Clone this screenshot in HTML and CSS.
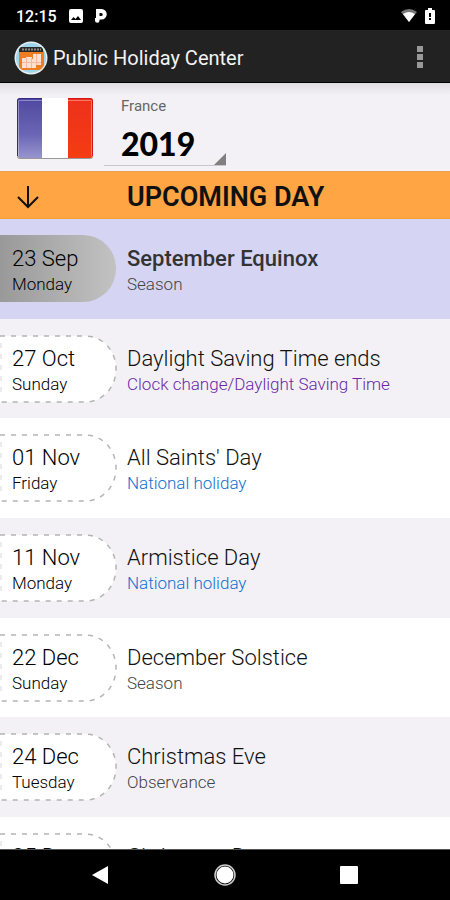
FILE: index.html
```html
<!DOCTYPE html>
<html lang="en">
<head>
<meta charset="utf-8">
<meta name="viewport" content="width=device-width, initial-scale=1">
<title>Public Holiday Center</title>
<link rel="stylesheet" href="styles.css">
</head>
<body>
<svg class="defs" aria-hidden="true">
  <symbol id="pill" viewBox="0 0 118 68">
    <path d="M0 1H85C103 1 116 16 116 34S103 67 85 67H0Z" fill="#fff"/>
    <path d="M0 1H85C103 1 116 16 116 34S103 67 85 67H0" fill="none" stroke="#b4b4b4" stroke-width="1.5" stroke-dasharray="5 6"/>
    <path d="M1 8V62" fill="none" stroke="#d8d8d8" stroke-dasharray="5 6"/>
  </symbol>
</svg>
<div class="status">
  <span>12:15</span>
  <svg width="14" height="14" viewBox="0 0 14 14"><path fill="#fff" fill-rule="evenodd" d="M2 0H12Q14 0 14 2V12Q14 14 12 14H2Q0 14 0 12V2Q0 0 2 0ZM2 11H12L9 7L6.500 10L4.500 8Z"/></svg>
  <svg class="parking" width="12" height="14" viewBox="0 0 12 14"><path fill="#fff" fill-rule="evenodd" d="M1 0H6.500A4.800 4.800 0 0 1 6.500 10.500H4.500V11.500A2.200 2.200 0 0 1 0 11.500V9H1ZM4.500 4V7H6.200A1.500 1.500 0 0 0 6.200 4Z"/></svg>
  <svg class="wifi" width="16" height="14" viewBox="0 0 16 14"><path fill="#777" d="M0 3Q8-3 16 3L8 13Z"/><path fill="#fff" d="M2 5Q8 1 14 5L8 13Z"/></svg>
  <svg width="10" height="16" viewBox="0 0 10 16"><path fill="#fff" d="M3 0H7V2H9Q10 2 10 3V15Q10 16 9 16H1Q0 16 0 15V3Q0 2 1 2H3Z"/><path d="M4 5H6V9H4ZM4 10H6V12H4Z"/></svg>
</div>
<header class="appbar">
  <svg width="34" height="34" viewBox="0 0 34 34">
    <defs><clipPath id="disc"><circle cx="17" cy="17" r="15"/></clipPath></defs>
    <circle cx="17" cy="17" r="16.500" fill="#e9eef0"/>
    <g clip-path="url(#disc)">
      <path fill="#9fd5ed" d="M0 0H34V34H0Z"/>
      <path fill="#ef7d22" d="M5 10H30V29H5Z"/>
      <path fill="#2b2a28" d="M5 6H29V11H5Z"/>
      <path stroke="#8a8a8a" stroke-width="2" stroke-dasharray="2 1" d="M8 8.500H27"/>
      <path fill="#ffe0d2" d="M8 17H12V16H18V18H19V13H27V24H22V27H8Z"/>
      <path stroke="#f8b899" d="M12.500 17V27M17.500 17V27M22.500 13V24M8 21.500H27"/>
    </g>
  </svg>
  <h1>Public Holiday Center</h1>
  <button class="menu" aria-label="More options"><svg width="7" height="23" viewBox="0 0 7 23"><path fill="#999" d="M0 0H6V6H0ZM0 8H6V14H0ZM0 16H6V22H0Z"/></svg></button>
</header>
<section class="picker">
  <svg class="flag" width="76" height="62" viewBox="0 0 76 62" role="img" aria-label="Flag of France">
    <defs>
      <linearGradient id="blue" x2="0" y2="1"><stop stop-color="#5048a0"/><stop offset=".6" stop-color="#6a65b3"/><stop offset="1" stop-color="#9894cf"/></linearGradient>
      <linearGradient id="red" x2="0" y2="1"><stop stop-color="#ee301c"/><stop offset="1" stop-color="#f43d12"/></linearGradient>
    </defs>
    <rect y="2" width="76" height="59" rx="3" fill="#999"/>
    <rect width="76" height="60" rx="3" fill="#fff"/>
    <path fill="url(#blue)" d="M3 0H25V60H3Q0 60 0 57V3Q0 0 3 0Z"/>
    <path fill="url(#red)" d="M51 0H73Q76 0 76 3V57Q76 60 73 60H51Z"/>
    <path fill="none" stroke="#fff" stroke-opacity=".35" d="M1.500 58V2.500H25M51 2.500H74.500V58"/>
    <path fill="none" stroke="#35298c" d="M.5 58V3Q.5 .5 3 .5H25"/>
    <path fill="none" stroke="#d01818" d="M51 .5H73Q75.500 .5 75.500 3V58"/>
  </svg>
  <div class="year">
    <label for="year">France</label>
    <select id="year"><option>2019</option></select>
    <svg class="corner" width="12" height="12" viewBox="0 0 12 12"><path fill="#808080" d="M12 0V12H0Z"/></svg>
  </div>
</section>
<div class="banner">
  <svg width="22" height="24" viewBox="0 0 22 24"><path fill="none" stroke="#111" stroke-width="2" d="M11 1V21M1 12L11 22L21 12"/></svg>
  <h2>UPCOMING DAY</h2>
</div>
<main class="days">
  <article class="day current">
    <div class="date"><b>23 Sep</b><span>Monday</span></div>
    <div class="event"><h3>September Equinox</h3><p>Season</p></div>
  </article>
  <article class="day">
    <div class="date"><svg><use href="#pill"/></svg><b>27 Oct</b><span>Sunday</span></div>
    <div class="event"><h3>Daylight Saving Time ends</h3><p class="clock">Clock change/Daylight Saving Time</p></div>
  </article>
  <article class="day">
    <div class="date"><svg><use href="#pill"/></svg><b>01 Nov</b><span>Friday</span></div>
    <div class="event"><h3>All Saints' Day</h3><p class="national">National holiday</p></div>
  </article>
  <article class="day">
    <div class="date"><svg><use href="#pill"/></svg><b>11 Nov</b><span>Monday</span></div>
    <div class="event"><h3>Armistice Day</h3><p class="national">National holiday</p></div>
  </article>
  <article class="day">
    <div class="date"><svg><use href="#pill"/></svg><b>22 Dec</b><span>Sunday</span></div>
    <div class="event"><h3>December Solstice</h3><p>Season</p></div>
  </article>
  <article class="day">
    <div class="date"><svg><use href="#pill"/></svg><b>24 Dec</b><span>Tuesday</span></div>
    <div class="event"><h3>Christmas Eve</h3><p>Observance</p></div>
  </article>
  <article class="day">
    <div class="date"><svg><use href="#pill"/></svg><b>25 Dec</b></div>
    <div class="event"><h3>Christmas Day</h3></div>
  </article>
</main>
<nav class="nav">
  <button aria-label="Back"><svg width="18" height="20" viewBox="0 0 18 20"><path fill="#fff" d="M16 1V19L0 10Z"/></svg></button>
  <button aria-label="Home"><svg width="22" height="22" viewBox="0 0 22 22"><circle cx="11" cy="11" r="10" fill="none" stroke="#ccc" stroke-width="1.500"/><circle cx="11" cy="11" r="8.500" fill="#fff"/></svg></button>
  <button aria-label="Recent apps"><svg width="18" height="18" viewBox="0 0 18 18"><rect width="18" height="18" rx="1" fill="#fff"/></svg></button>
</nav>
</body>
</html>
```
FILE: styles.css
```css
* { box-sizing: border-box; }
body {
  margin: 0;
  height: 100vh;
  display: flex;
  flex-direction: column;
  overflow: hidden;
  background: #fff;
  color: #222;
  font-family: Roboto, sans-serif;
}
h1, h2, h3, p { margin: 0; font-weight: 400; }
svg { display: block; flex: none; }
button { border: 0; padding: 0; background: none; }
.defs { position: absolute; width: 0; height: 0; }

.status {
  display: flex;
  align-items: center;
  gap: 12px;
  flex: none;
  height: 30px;
  padding: 2px 15px 0 16px;
  background: #000;
  color: #fff;
  font-size: 16px;
  font-weight: 500;
}
.wifi { margin-left: auto; margin-right: -4px; }

.appbar {
  display: flex;
  align-items: center;
  gap: 5px;
  flex: none;
  height: 53px;
  padding: 3px 26px 0 14px;
  background: #222;
  border-bottom: 1px solid #000;
  color: #f3f3f3;
}
.appbar h1 { flex: 1; font-size: 20px; line-height: 24px; }

.picker {
  display: flex;
  gap: 11px;
  flex: none;
  height: 88px;
  padding: 15px 17px 0;
  background: linear-gradient(#dfdde1, #f3f1f5 12px);
}
.year { position: relative; width: 122px; height: 68px; border-bottom: 1px solid #c8c6ca; }
.year label { display: block; padding-left: 17px; font-size: 15px; line-height: 16px; color: #666; }
.year select {
  appearance: none;
  display: block;
  width: 100%;
  height: 40px;
  margin-top: 10px;
  padding: 0 0 0 17px;
  border: 0;
  background: none;
  color: #000;
  font: 900 32px/40px Lato, sans-serif;
}
.corner { position: absolute; right: 0; bottom: 0; pointer-events: none; }

.banner {
  display: flex;
  align-items: center;
  gap: 88px;
  flex: none;
  height: 48px;
  padding: 3px 17px 0;
  background: #ffa544;
  border-top: 1px solid #e9a052;
  border-bottom: 1px solid #f5a234;
  color: #111;
}
.banner h2 { font-size: 27px; font-weight: 600; line-height: 32px; }

.days {
  flex: 1;
  min-height: 0;
  display: grid;
  grid-template-rows: repeat(6, 1fr) 32px;
  overflow: hidden;
}
.day {
  display: flex;
  align-items: flex-start;
  gap: 11px;
  min-height: 0;
  padding-top: 16px;
}
.day:nth-child(even) { background: #f3f1f5; }
.day.current { background: #d5d5f3; }
.date {
  position: relative;
  flex: none;
  width: 116px;
  height: 68px;
  padding: 10px 0 0 12px;
}
.date svg { position: absolute; top: 0; left: 0; width: 118px; height: 68px; }
.date b, .date span { position: relative; display: block; }
.date b { font-size: 22px; font-weight: 300; line-height: 27px; color: #000; }
.date span { font-size: 17px; font-weight: 300; line-height: 24px; color: #000; }
.current .date { height: 67px; border-radius: 0 33px 33px 0; background: linear-gradient(90deg, #999, #c2c2c2); }
.event { padding-top: 10px; }
.event h3 { font-size: 22px; font-weight: 300; line-height: 27px; color: #111; white-space: nowrap; }
.event p { font-size: 17px; font-weight: 300; line-height: 25px; color: #444; white-space: nowrap; }
.event .clock { color: #6a28a8; }
.event .national { color: #1070d0; }
.day.current h3 { font-weight: 500; color: #333; }

.nav {
  display: flex;
  align-items: center;
  justify-content: center;
  gap: 104px;
  flex: none;
  height: 51px;
  border-top: 1px solid #555;
  background: #000;
}
```
